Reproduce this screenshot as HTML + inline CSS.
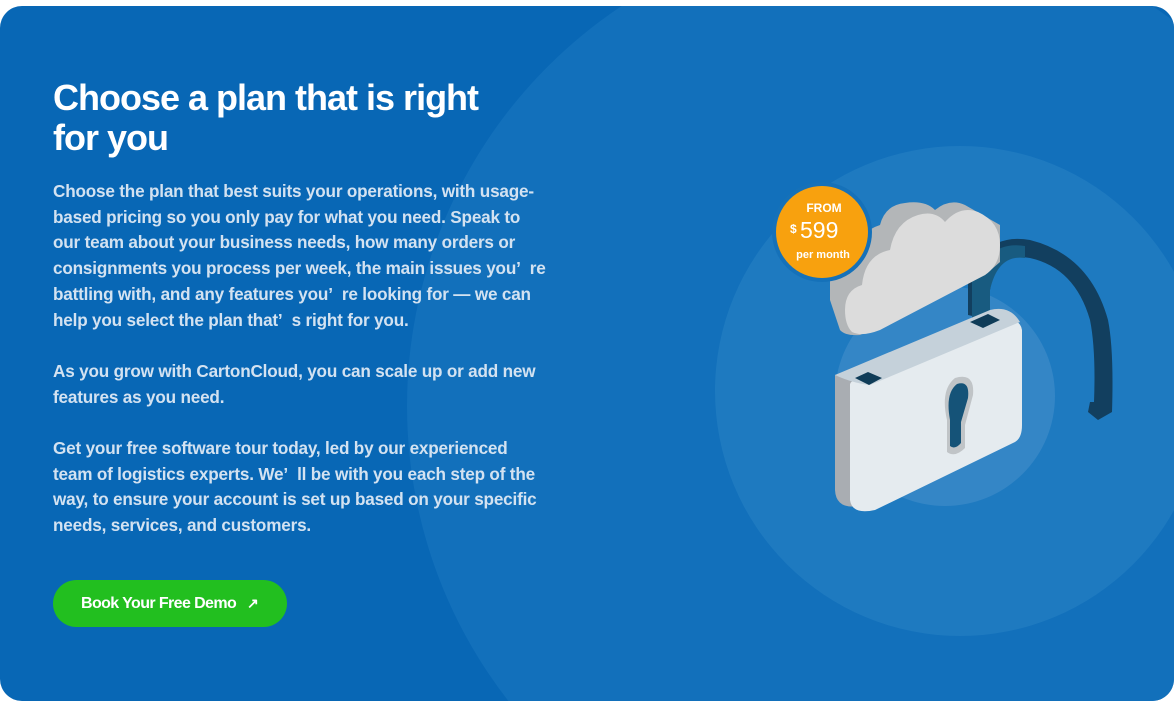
<!DOCTYPE html>
<html><head><meta charset="utf-8"><style>
html,body{margin:0;padding:0;background:#fff;width:1174px;height:707px;overflow:hidden;position:relative}
.card{position:absolute;left:0;top:6px;width:1174px;height:695px;border-radius:22px;background:#0867b5;overflow:hidden;font-family:"Liberation Sans",sans-serif}
.c{position:absolute;border-radius:50%}
h1{position:absolute;left:53px;top:72px;margin:0;color:#fff;font-size:36px;line-height:40px;font-weight:bold;letter-spacing:-1px;white-space:nowrap}
.p{position:absolute;left:53px;color:#d3e2f1;font-size:17.5px;line-height:25.7px;font-weight:bold;white-space:nowrap;transform:scaleX(.98);transform-origin:left;letter-spacing:-.2px}
.btn{position:absolute;left:53px;top:574px;width:234px;height:47px;border-radius:24px;background:#22bf1f;color:#fff;font-weight:bold;font-size:16px;line-height:47px;letter-spacing:-.6px}
.btn span{position:absolute;left:28px}
.btn i{position:absolute;left:194px;top:0;font-style:normal;font-size:14px}
</style></head><body>
<div class="card">
<div class="c" style="left:407px;top:-80px;width:960px;height:960px;background:#1270bb"></div>
<div class="c" style="left:715px;top:140px;width:490px;height:490px;background:#1e7ac0"></div>
<div class="c" style="left:835px;top:280px;width:220px;height:220px;background:#3486c6"></div>
<svg style="position:absolute;left:0;top:0" width="1174" height="695" viewBox="0 6 1174 695">
<path d="M968 315 L968 280 Q985 232 1030 240 Q1090 255 1108 320 Q1114 350 1112 412 L1098 420 L1088 412 L1090 402 L1094 402 Q1096 350 1090 320 Q1075 268 1030 258 Q995 252 990 290 L990 320 Z" fill="#123f5f"/>
<path d="M972 305 L972 282 Q988 240 1025 246 L1025 258 Q998 254 990 290 L990 320 L972 320Z" fill="#185b80"/>
<path d="M835 375 L835 490 Q836 510 860 506 L1012 430 L1012 320 Q1010 310 995 312 L850 370 Z" fill="#a9adb2"/>
<path d="M850 385 L850 500 Q852 515 875 510 L1015 442 Q1022 438 1022 425 L1022 330 Q1020 318 1005 322 L870 380 Q850 378 850 385Z" fill="#e5ebef"/>
<path d="M835 375 L990 310 Q1010 305 1020 322 L870 385 Q852 383 835 375Z" fill="#c5d1da"/>
<path d="M855 378 L868 372 L882 378 L869 385Z" fill="#0f3c58"/>
<path d="M970 322 L988 314 L1000 320 L983 328Z" fill="#0f3c58"/>
<path d="M955 378 Q975 372 973 395 L965 425 L965 448 Q955 458 947 452 L947 420 Q940 390 955 378Z" fill="#c0c4c7"/>
<path d="M957 384 Q970 380 968 398 L961 422 L961 443 Q955 450 950 446 L950 420 Q945 393 957 384Z" fill="#155378"/>
<path d="M830 300 L830 275 Q835 258 855 255 Q858 232 880 225 Q885 205 905 203 Q925 200 935 210 Q950 198 965 205 L1000 225 L1000 262 L985 275 L860 335 Q845 336 840 330 Z" fill="#b3b6b8"/>
<path d="M845 310 Q845 290 862 285 Q865 255 890 250 Q895 222 918 215 Q935 210 945 222 Q960 205 978 212 Q1000 222 1000 245 Q1000 265 985 275 L880 330 Q862 337 852 332 Q845 325 845 310Z" fill="#dcdcdc"/>
<circle cx="822" cy="232" r="50" fill="#1571b9"/>
<circle cx="822" cy="232" r="46" fill="#f8a10e"/>
<text x="824" y="212" fill="#fff" font-family="Liberation Sans,sans-serif" font-weight="bold" font-size="12" text-anchor="middle">FROM</text>
<text x="790" y="233" fill="#fff" font-family="Liberation Sans,sans-serif" font-weight="bold" font-size="12">$</text>
<text x="800" y="238" fill="#fff" font-family="Liberation Sans,sans-serif" font-size="23">599</text>
<text x="823" y="258" fill="#fff" font-family="Liberation Sans,sans-serif" font-weight="bold" font-size="11" text-anchor="middle">per month</text>
</svg>
<h1>Choose a plan that is right<br>for you</h1>
<div class="p" style="top:173px">Choose the plan that best suits your operations, with usage-<br>based pricing so you only pay for what you need. Speak to<br>our team about your business needs, how many orders or<br>consignments you process per week, the main issues you’&nbsp; re<br>battling with, and any features you’&nbsp; re looking for — we can<br>help you select the plan that’&nbsp; s right for you.</div>
<div class="p" style="top:353px">As you grow with CartonCloud, you can scale up or add new<br>features as you need.</div>
<div class="p" style="top:430px">Get your free software tour today, led by our experienced<br>team of logistics experts. We’&nbsp; ll be with you each step of the<br>way, to ensure your account is set up based on your specific<br>needs, services, and customers.</div>
<div class="btn"><span>Book Your Free Demo</span><i>↗</i></div>
</div>
</body></html>
